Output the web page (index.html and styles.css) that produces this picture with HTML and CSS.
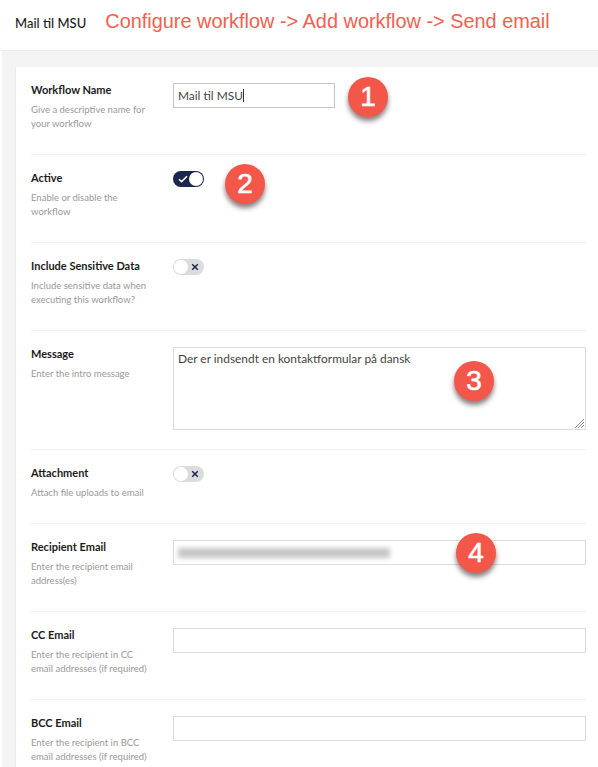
FILE: index.html
```html
<!DOCTYPE html>
<html>
	<head>
		<title>Mail til MSU</title>
		<link rel="stylesheet" href="styles.css">
	</head>
	<body>
		<div class="page">
			<div class="header">
				<span class="workflowTitle">Mail til MSU</span>
				<span class="annotation">Configure workflow -&gt; Add workflow -&gt; Send email</span>
			</div>
			<div class="panel">
				<form class="card" name="workflow">
					<div class="row">
						<div class="info">
							<label class="name">Workflow Name</label>
							<p class="hint">Give a descriptive name for your workflow</p>
						</div>
						<div class="control">
							<div class="input inputName">Mail til MSU<span class="caret"></span></div>
						</div>
						<span class="badge badge1">1</span>
					</div>
					<div class="row">
						<div class="info">
							<label class="name">Active</label>
							<p class="hint">Enable or disable the workflow</p>
						</div>
						<div class="control">
							<span class="toggle toggleOn">
								<svg class="toggleIcon" width="10" height="8" viewBox="0 0 10 8"><path d="M1 4.2 L3.6 6.6 L9 1.2" fill="none" stroke="#ffffff" stroke-width="1.5"/></svg>
								<span class="knob"></span>
							</span>
						</div>
						<span class="badge badge2">2</span>
					</div>
					<div class="row">
						<div class="info">
							<label class="name">Include Sensitive Data</label>
							<p class="hint">Include sensitive data when executing this workflow?</p>
						</div>
						<div class="control">
							<span class="toggle">
								<span class="knob"></span>
								<svg class="toggleIcon" width="8" height="8" viewBox="0 0 8 8"><path d="M1.2 1.2 L6.8 6.8 M6.8 1.2 L1.2 6.8" fill="none" stroke="#1b264f" stroke-width="1.5"/></svg>
							</span>
						</div>
					</div>
					<div class="row rowMessage">
						<div class="info">
							<label class="name">Message</label>
							<p class="hint">Enter the intro message</p>
						</div>
						<div class="control">
							<div class="input textarea">
								Der er indsendt en kontaktformular på dansk
								<svg class="grip" width="10" height="10" viewBox="0 0 10 10"><path d="M1 10 L10 1 M4 10 L10 4 M7 10 L10 7" fill="none" stroke="#8a8a8a" stroke-width="1"/></svg>
							</div>
						</div>
						<span class="badge badge3">3</span>
					</div>
					<div class="row rowShort">
						<div class="info">
							<label class="name">Attachment</label>
							<p class="hint">Attach file uploads to email</p>
						</div>
						<div class="control">
							<span class="toggle">
								<span class="knob"></span>
								<svg class="toggleIcon" width="8" height="8" viewBox="0 0 8 8"><path d="M1.2 1.2 L6.8 6.8 M6.8 1.2 L1.2 6.8" fill="none" stroke="#1b264f" stroke-width="1.5"/></svg>
							</span>
						</div>
					</div>
					<div class="row">
						<div class="info">
							<label class="name">Recipient Email</label>
							<p class="hint">Enter the recipient email address(es)</p>
						</div>
						<div class="control">
							<div class="input inputWide"><span class="blurred"></span></div>
						</div>
						<span class="badge badge4">4</span>
					</div>
					<div class="row">
						<div class="info">
							<label class="name">CC Email</label>
							<p class="hint">Enter the recipient in CC email addresses (if required)</p>
						</div>
						<div class="control">
							<div class="input inputWide"></div>
						</div>
					</div>
					<div class="row">
						<div class="info">
							<label class="name">BCC Email</label>
							<p class="hint">Enter the recipient in BCC email addresses (if required)</p>
						</div>
						<div class="control">
							<div class="input inputWide"></div>
						</div>
					</div>
				</form>
			</div>
		</div>
	</body>
</html>
```
FILE: styles.css
```css
html, body {
	margin: 0;
	padding: 0;
	background-color: #ffffff;
}

.page {
	width: 598px;
	height: 767px;
	overflow: hidden;
	font-family: "Lato", "Liberation Sans", sans-serif;
}

.header {
	height: 51px;
	padding: 9px 0 0 15px;
	box-sizing: border-box;
	display: flex;
	align-items: flex-start;
	gap: 19px;
	border-bottom: 1px solid #ececec;
}

.workflowTitle {
	font-size: 13px;
	font-weight: 500;
	line-height: 28px;
	color: #1b1b1b;
}

.annotation {
	font-family: "Liberation Sans", sans-serif;
	font-size: 19.9px;
	line-height: 25px;
	color: #f2604f;
}

.panel {
	margin-left: 2px;
	padding: 16px 0 0 13px;
	background-color: #f5f4f4;
}

.card {
	display: block;
	background-color: #ffffff;
	padding: 0 12px 0 15px;
	border-left: 1px solid #ececec;
}

.row {
	position: relative;
	height: 88px;
	box-sizing: border-box;
	padding-top: 15px;
	display: flex;
	border-bottom: 1px solid #f0f0f0;
}

.rowMessage {
	height: 119px;
}

.rowShort {
	height: 74px;
}

.info {
	width: 142px;
	flex: none;
}

.name {
	display: block;
	font-size: 11px;
	font-weight: 700;
	line-height: 16px;
	color: #1b1b1b;
}

.hint {
	margin: 5px 0 0 0;
	font-size: 9.5px;
	line-height: 14px;
	color: #999999;
	width: 124px;
}

.control {
	flex: 1;
	padding-top: 1px;
}

.input {
	box-sizing: border-box;
	height: 25px;
	border: 1px solid #dcdcdc;
	padding: 0 4px;
	font-size: 11.9px;
	line-height: 23px;
	color: #444444;
	background-color: #ffffff;
}

.inputName {
	width: 162px;
	border-color: #c4c4c4;
}

.inputWide {
	display: flex;
	align-items: center;
}

.caret {
	display: inline-block;
	width: 1px;
	height: 13px;
	background-color: #333333;
	vertical-align: -2px;
}

.textarea {
	position: relative;
	height: 83px;
	line-height: 21px;
}

.grip {
	position: absolute;
	right: 1px;
	bottom: 1px;
}

.blurred {
	display: block;
	width: 212px;
	height: 10px;
	background-color: #c6c6c6;
	filter: blur(2.5px);
}

.toggle {
	display: flex;
	align-items: center;
	justify-content: space-between;
	box-sizing: border-box;
	width: 31px;
	height: 16px;
	padding: 0 5px 0 1px;
	border-radius: 8px;
	background-color: #dcdcdc;
}

.toggleOn {
	padding: 0 1px 0 5px;
	background-color: #1b264f;
}

.knob {
	width: 14px;
	height: 14px;
	border-radius: 50%;
	background-color: #ffffff;
}

.badge {
	position: absolute;
	width: 40px;
	height: 40px;
	border-radius: 50%;
	background-color: #f2574a;
	box-shadow: 0 4px 5px rgba(60, 40, 40, 0.6);
	font-family: "Liberation Sans", sans-serif;
	font-size: 28px;
	-webkit-text-stroke: 0.6px #ffffff;
	line-height: 40px;
	text-align: center;
	color: #ffffff;
}

.badge1 {
	left: 317px;
	top: 10px;
}

.badge2 {
	left: 194px;
	top: 9px;
}

.badge3 {
	left: 423px;
	top: 30px;
}

.badge4 {
	left: 425px;
	top: 9px;
}
```
